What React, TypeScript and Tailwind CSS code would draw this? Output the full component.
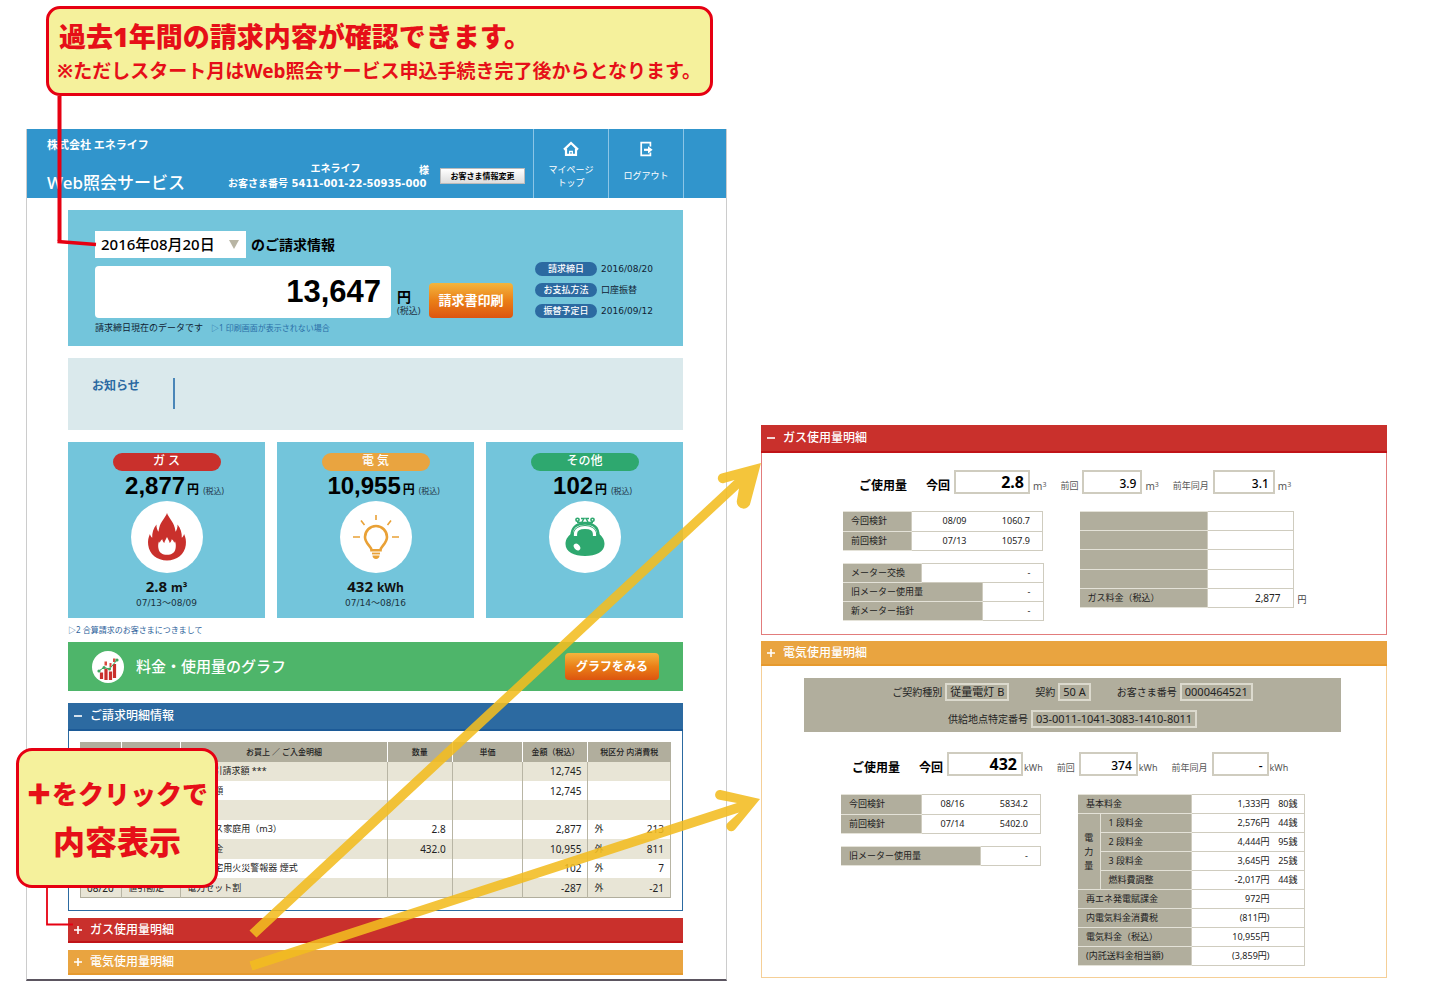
import React from "react";

type Tone = "red" | "orange" | "blue";

const barTone: Record<Tone, string> = {
  red: "bg-[#c9302c] border-[#c01418]",
  orange: "bg-[#e9a440] border-[#e69a2e]",
  blue: "bg-[#2c6aa1] border-[#1c5a97]",
};

function Bar({ tone, open, title, tall }: { tone: Tone; open: boolean; title: string; tall?: boolean }) {
  return (
    <button
      type="button"
      aria-expanded={open}
      className={`flex w-full items-center gap-2 border-b-2 pl-1.5 text-left text-[12px] font-medium text-white ${
        tall ? "h-[28px]" : "h-[25px]"
      } ${barTone[tone]}`}
    >
      <svg viewBox="0 0 8 8" className="size-2" stroke="currentColor" strokeWidth="1.6" aria-hidden="true">
        <path d={open ? "M0 4H8" : "M0 4H8M4 0V8"} />
      </svg>
      <span className="leading-4">{title}</span>
    </button>
  );
}

function House() {
  return (
    <svg viewBox="0 0 16 16" className="h-4 w-4" fill="none" stroke="#fff" strokeWidth="2.2" aria-hidden="true">
      <path d="M1 8.6 8 2l7 6.6" />
      <path d="M3 7.5v6.4h10V7.5" />
      <path d="M6.7 14v-3.6h2.6V14" strokeWidth="1.3" />
    </svg>
  );
}

function Exit() {
  return (
    <svg viewBox="0 0 16 16" className="h-4 w-4" fill="none" stroke="#fff" strokeWidth="1.7" aria-hidden="true">
      <path d="M12.4 5.6V1.600H3.200v12.800h9.200v-3" />
      <path d="M6 8.800h5" strokeWidth="2.200" />
      <path d="M10 5.200 14.600 8.800 10 12.400z" fill="#fff" stroke="none" />
    </svg>
  );
}

function Flame() {
  return (
    <svg viewBox="0 0 40 48" className="h-12 w-10" aria-hidden="true">
      <path
        fill="#c9302c"
        d="M20 0c1.500 4.500 6.200 8.500 7.700 14.500.4 1.500.7 3 .8 4.200 1.500-1.800 2.200-4.700 2-7.200 3.200 3.800 4.500 8.500 4.300 13.300 1.200-1 2-2.300 2.300-3.800C38.700 24.500 39.300 28 38.800 32 37.800 41.200 29.800 47.500 20 47.500S2.200 41.200 1.200 32c-.5-4 .1-7.500 1.700-11 .3 1.500 1.100 2.800 2.300 3.800C5 20 6.300 15.300 9.500 11.500c-.2 2.500.5 5.400 2 7.200.1-1.200.4-2.700.8-4.200C13.800 8.500 18.500 4.500 20 0z"
      />
      <path
        fill="#fff"
        d="M20 24c1 2 2.200 3.700 2.700 6 1.200-1 1.800-2.300 2-3.800 1.500 1 2 2 2.500 3.600 0.500-.4.700-.8.800-1.500 1 2.500 1 5 .5 7.500-.8 4-4 6-8.500 6s-7.700-2-8.500-6c-.5-2.500-.5-5 .5-7.500.1.700.3 1.100.8 1.500.5-1.600 1-2.600 2.500-3.600.2 1.500.8 2.800 2 3.800.5-2.300 1.700-4 2.700-6z"
      />
    </svg>
  );
}

function Bulb() {
  return (
    <svg viewBox="0 0 46 46" className="h-[46px] w-[46px]" fill="none" stroke="#e9a136" strokeWidth="1.6" aria-hidden="true">
      <path d="M23 1v5M8 6.500l3.500 4.500M38 6.500 34.500 11M0 23h7M39 23h7" />
      <path
        d="M18.500 36.200c0-4-6.500-6.500-6.500-13.200a11 11 0 0 1 22 0c0 6.700-6.500 9.200-6.500 13.200z"
        strokeWidth="2.600"
      />
      <path d="M19 39.500h8" strokeWidth="1.800" />
      <path d="M19.500 41.500h7c0 2-1.500 3.500-3.500 3.500s-3.500-1.500-3.500-3.500z" fill="#e9a136" stroke="none" />
    </svg>
  );
}

function Purse() {
  return (
    <svg viewBox="0 0 40 40" className="size-10" aria-hidden="true">
      <path
        fill="#2ea86f"
        d="M8 16C3.500 18 .5 22 .5 27 .5 35 9 39 20 39s19.500-4 19.500-12c0-5-3-9-7.500-11-1-5-6-8-12-8S9 11 8 16z"
      />
      <path d="M10.500 19v-2c0-4 4-6.500 9.500-6.500s9.500 2.500 9.500 6.500v2" fill="none" stroke="#fff" strokeWidth="3.200" />
      <path d="M6.500 19c0-8 4-12.500 13.500-12.500S33.500 11 33.500 19" fill="none" stroke="#2ea86f" strokeWidth="2.400" />
      <circle cx="12.500" cy="2.800" r="1.600" fill="none" stroke="#2ea86f" strokeWidth="1.600" />
      <circle cx="27.500" cy="2.800" r="1.600" fill="none" stroke="#2ea86f" strokeWidth="1.600" />
      <path d="M12 5.500h16M16 1.500h3l-2 3.500M24 1.500h-3l2 3.500" fill="none" stroke="#2ea86f" strokeWidth="1.500" />
      <ellipse cx="12" cy="30" rx="2.800" ry="3.800" fill="#fff" transform="rotate(-40 12 30)" />
    </svg>
  );
}

function GraphBadge() {
  return (
    <svg viewBox="0 0 32 32" className="size-8" aria-hidden="true">
      <circle cx="16" cy="16" r="16" fill="#fff" />
      <path
        d="M9.500 28v-6.500M14 29v-11.500M18.500 29v-8.500M22.500 27V13"
        stroke="#c9302c"
        strokeWidth="3.200"
        fill="none"
      />
      <path d="M12.500 10.500h2.500v4h-2.500zM17.500 12h2v4h-2zM21 7.500h2.500v3.500h-2.500z" fill="#d84a40" />
      <path d="M6 20.500 12 16.500 17.500 18 25 9" stroke="#3aa55c" strokeWidth="1" fill="none" />
      <g fill="#3aa55c">
        <circle cx="7" cy="20" r="1.600" />
        <circle cx="12" cy="16.500" r="1.500" />
        <circle cx="17.500" cy="18" r="1.500" />
        <circle cx="25" cy="9" r="1.600" />
      </g>
    </svg>
  );
}

function UsageCard({
  name,
  pill,
  amount,
  icon,
  usage,
  unit,
  period,
}: {
  name: string;
  pill: string;
  amount: string;
  icon: React.ReactNode;
  usage?: string;
  unit?: React.ReactNode;
  period?: string;
}) {
  return (
    <section className="flex h-[176px] flex-col items-center bg-[#73c5db] pt-[11px]">
      <h2 className={`h-[18px] w-[108px] rounded-full text-center text-[12px] font-medium leading-4 text-white ${pill}`}>
        {name}
      </h2>
      <p className="flex h-[30px] items-baseline gap-0.5 pl-4 leading-[30px] text-black">
        <span className="font-['Liberation_Sans',sans-serif] text-[24px] font-bold">{amount}</span>
        <span className="text-[12px] font-bold">円</span>
        <span className="pl-0.5 text-[8px] text-[#234]">(税込)</span>
      </p>
      <div className="flex size-[72px] items-center justify-center rounded-full bg-white">{icon}</div>
      {usage && (
        <>
          <p className="pt-[5px] text-[15px] font-bold leading-4 text-[#111]">
            {usage} <span className="text-[12px]">{unit}</span>
          </p>
          <p className="pt-px font-['DejaVu_Sans','Noto_Sans_CJK_JP',sans-serif] text-[9px] leading-3 text-[#1b3340]">
            {period}
          </p>
        </>
      )}
    </section>
  );
}

const details = [
  ["", "", "*** 割引請求額 ***", "", "", "12,745", "", ""],
  ["", "", "入金総額", "", "", "12,745", "", ""],
  ["", "", "", "", "", "", "", ""],
  ["", "", "都市ガス家庭用（m3）", "2.8", "", "2,877", "外", "213"],
  ["", "", "電気料金", "432.0", "", "10,955", "外", "811"],
  ["", "", "　　住宅用火災警報器 煙式", "", "", "102", "外", "7"],
  ["08/20", "値引勘定", "電力セット割", "", "", "-287", "外", "-21"],
];

function DetailTable() {
  const cell = "border-r border-[#b8b5a4] py-0";
  return (
    <table className="h-[156px] w-full table-fixed border-collapse border border-[#b1ae9d] text-[10px] leading-3 text-[#222]">
      <colgroup>
        <col className="w-[7%]" />
        <col className="w-[10%]" />
        <col className="w-[35%]" />
        <col className="w-[11%]" />
        <col className="w-[12%]" />
        <col className="w-[11%]" />
        <col className="w-[14%]" />
      </colgroup>
      <thead>
        <tr className="h-[19px] bg-[#b1ae9d] text-[8px]">
          {["", "", "お買上 ／ ご入金明細", "数量", "単価", "金額（税込）", "税区分 内消費税"].map((h, i) => (
            <th key={i} scope="col" className="border-r border-white p-0 text-center font-medium last:border-[#b1ae9d]">
              {h}
            </th>
          ))}
        </tr>
      </thead>
      <tbody>
        {details.map((r, i) => (
          <tr key={i} className="h-[19px] odd:bg-[#e8e5d6] even:bg-white">
            <td className={`${cell} pl-1.5`}>{r[0]}</td>
            <td className={`${cell} pl-1.5 text-[9px]`}>{r[1]}</td>
            <td className={`${cell} whitespace-pre pl-1.5 text-[9px]`}>{r[2]}</td>
            <td className={`${cell} pr-1.5 text-right`}>{r[3]}</td>
            <td className={`${cell} pr-1.5 text-right`}>{r[4]}</td>
            <td className={`${cell} pr-1.5 text-right`}>{r[5]}</td>
            <td className={`${cell} px-1.5`}>
              <span className="flex justify-between">
                <span className="text-[9px]">{r[6]}</span>
                <span>{r[7]}</span>
              </span>
            </td>
          </tr>
        ))}
      </tbody>
    </table>
  );
}

function Reading({
  label,
  value,
  unit,
  box,
  main,
}: {
  label: string;
  value: string;
  unit: React.ReactNode;
  box: string;
  main?: boolean;
}) {
  return (
    <div className="flex items-end">
      <span className={main ? "pr-1 text-[12px] font-bold leading-4 text-black" : "pr-1 text-[9px] leading-4 text-[#555]"}>
        {label}
      </span>
      <output
        className={`flex h-6 items-center justify-end border-2 border-[#cfccbf] pr-1 text-black ${box} ${
          main ? "text-[16px] font-bold" : "pt-1 text-[12px] font-medium"
        }`}
      >
        {value}
      </output>
      {unit}
    </div>
  );
}

const cubic = (
  <span className="pl-[3px] text-[10px] leading-4 text-[#555]">
    m<sup className="text-[7px]">3</sup>
  </span>
);

const kwh = <span className="pl-px text-[9px] leading-4 text-[#555]">kWh</span>;

const thBase = "border-y border-[#e4e2d8] bg-[#b1ae9d] py-0 pl-2 text-left font-normal";
const tdBase = "border border-[#cfccbf] bg-white py-0 text-right";
const miniTable = "table-fixed border-collapse text-[9px] leading-3 text-[#222]";

function MeterDates({ rows, wide }: { rows: string[][]; wide?: boolean }) {
  return (
    <table className={`${miniTable} h-10 w-[200px]`}>
      <tbody>
        {rows.map((r) => (
          <tr key={r[0]}>
            <th scope="row" className={`${thBase} ${wide ? "w-20" : "w-[68px]"}`}>
              {r[0]}
            </th>
            <td className={`${tdBase} border-r-0 pr-2`}>{r[1]}</td>
            <td className={`${tdBase} w-[68px] border-l-0 pr-3`}>{r[2]}</td>
          </tr>
        ))}
      </tbody>
    </table>
  );
}

function Tag({ label, value }: { label: string; value: string }) {
  return (
    <div className="flex items-center gap-[3px]">
      <dt>{label}</dt>
      <dd className="h-[18px] border-2 border-[#dcdace] px-[3px] text-[11px] leading-[14px]">{value}</dd>
    </div>
  );
}

function GasPanel() {
  return (
    <section>
      <Bar tone="red" open tall title="ガス使用量明細" />
      <div className="h-[182px] border border-t-0 border-[#e27c7c] pt-[17px]">
        <div className="flex items-end pl-[97px]">
          <span className="w-[67px] text-[12px] font-bold leading-4 text-black">ご使用量</span>
          <div className="flex gap-[14px]">
            <Reading main label="今回" value="2.8" unit={cubic} box="w-[76px]" />
            <Reading label="前回" value="3.9" unit={cubic} box="w-[60px]" />
            <Reading label="前年同月" value="3.1" unit={cubic} box="w-[62px]" />
          </div>
        </div>
        <div className="flex gap-9 pl-[81px] pt-[17px]">
          <div className="flex flex-col gap-3">
            <MeterDates
              rows={[
                ["今回検針", "08/09", "1060.7"],
                ["前回検針", "07/13", "1057.9"],
              ]}
            />
            <table className={`${miniTable} h-[58px] w-[200px]`}>
              <colgroup>
                <col className="w-[78px]" />
                <col className="w-[61px]" />
                <col className="w-[61px]" />
              </colgroup>
              <tbody>
                <tr>
                  <th scope="row" className={thBase}>メーター交換</th>
                  <td colSpan={2} className={`${tdBase} pr-3`}>-</td>
                </tr>
                <tr>
                  <th scope="row" colSpan={2} className={thBase}>旧メーター使用量</th>
                  <td className={`${tdBase} pr-3`}>-</td>
                </tr>
                <tr>
                  <th scope="row" colSpan={2} className={thBase}>新メーター指針</th>
                  <td className={`${tdBase} pr-3`}>-</td>
                </tr>
              </tbody>
            </table>
          </div>
          <div className="flex items-end gap-1">
            <table className={`${miniTable} h-[97px] w-[214px] self-start`}>
              <tbody>
                {["", "", "", "", "ガス料金（税込）"].map((l, i) => (
                  <tr key={i} className="h-[19px]">
                    <th scope="row" className={`${thBase} w-[128px]`}>{l}</th>
                    <td className={`${tdBase} pr-3 text-[10px]`}>{l && "2,877"}</td>
                  </tr>
                ))}
              </tbody>
            </table>
            <span className="pb-[13px] text-[9px] leading-4 text-[#444]">円</span>
          </div>
        </div>
      </div>
    </section>
  );
}

function PowerPanel() {
  const yen = (v: string, sen?: string) => (
    <span className="flex justify-end">
      <span>{v}</span>
      <span className="w-7 text-right">{sen}</span>
    </span>
  );
  const steps = [
    ["1 段料金", "2,576円", "44銭"],
    ["2 段料金", "4,444円", "95銭"],
    ["3 段料金", "3,645円", "25銭"],
    ["燃料費調整", "-2,017円", "44銭"],
  ];
  const totals = [
    ["再エネ発電賦課金", "972円"],
    ["内電気料金消費税", "(811円)"],
    ["電気料金（税込）", "10,955円"],
    ["(内託送料金相当額)", "(3,859円)"],
  ];
  return (
    <section>
      <Bar tone="orange" open={false} title="電気使用量明細" />
      <div className="h-[312px] border border-t-0 border-[#f5cf97] pt-3">
        <dl className="ml-[42px] mr-[45px] flex h-[54px] flex-col items-center gap-[9px] bg-[#b1ae9d] pt-[5px] text-[10px] leading-4 text-[#222]">
          <div className="flex gap-[26px]">
            <Tag label="ご契約種別" value="従量電灯 B" />
            <Tag label="契約" value="50 A" />
            <Tag label="お客さま番号" value="0000464521" />
          </div>
          <Tag label="供給地点特定番号" value="03-0011-1041-3083-1410-8011" />
        </dl>
        <div className="flex items-end pl-[90px] pt-5">
          <span className="w-[67px] text-[12px] font-bold leading-4 text-black">ご使用量</span>
          <div className="flex gap-[14px]">
            <Reading main label="今回" value="432" unit={kwh} box="w-[76px]" />
            <Reading label="前回" value="374" unit={kwh} box="w-[59px]" />
            <Reading label="前年同月" value="-" unit={kwh} box="w-[57px]" />
          </div>
        </div>
        <div className="flex gap-[37px] pl-[79px] pt-[18px]">
          <div className="flex flex-col gap-3">
            <MeterDates
              wide
              rows={[
                ["今回検針", "08/16", "5834.2"],
                ["前回検針", "07/14", "5402.0"],
              ]}
            />
            <table className={`${miniTable} h-5 w-[200px]`}>
              <tbody>
                <tr>
                  <th scope="row" className={`${thBase} w-[139px]`}>旧メーター使用量</th>
                  <td className={`${tdBase} pr-3`}>-</td>
                </tr>
              </tbody>
            </table>
          </div>
          <table className={`${miniTable} h-[172px] w-[226px]`}>
            <colgroup>
              <col className="w-[22px]" />
              <col className="w-[91px]" />
              <col className="w-[113px]" />
            </colgroup>
            <tbody>
              <tr>
                <th scope="row" colSpan={2} className={thBase}>基本料金</th>
                <td className={`${tdBase} pr-1.5`}>{yen("1,333円", "80銭")}</td>
              </tr>
              {steps.map((s, i) => (
                <tr key={s[0]}>
                  {i === 0 && (
                    <th scope="rowgroup" rowSpan={4} className="border border-l-0 border-[#e4e2d8] bg-[#b1ae9d] p-0 text-center font-normal leading-[14px]">
                      電
                      <br />
                      力
                      <br />
                      量
                    </th>
                  )}
                  <th scope="row" className={`${thBase} border-l`}>{s[0]}</th>
                  <td className={`${tdBase} pr-1.5`}>{yen(s[1], s[2])}</td>
                </tr>
              ))}
              {totals.map((t) => (
                <tr key={t[0]}>
                  <th scope="row" colSpan={2} className={thBase}>{t[0]}</th>
                  <td className={`${tdBase} pr-1.5`}>{yen(t[1])}</td>
                </tr>
              ))}
            </tbody>
          </table>
        </div>
      </div>
    </section>
  );
}

const orangeButton =
  "rounded-sm bg-linear-to-b from-[#f3b53c] via-[#ea7f17] to-[#dc5410] font-bold text-white";

export default function App() {
  return (
    <div className="relative bg-white pb-[3px] pt-1.5 font-['Noto_Sans','Noto_Sans_CJK_JP',sans-serif]">
      <aside className="ml-[46px] flex h-[90px] w-[667px] flex-col justify-center whitespace-nowrap rounded-[14px] border-[3px] border-[#e60012] bg-[#f5f19c] pl-2 pt-1 text-[#e60f18]">
        <p className="pl-0.5 text-[27px] font-black leading-9">過去1年間の請求内容が確認できます。</p>
        <p className="text-[19px] font-bold leading-8">※ただしスタート月はWeb照会サービス申込手続き完了後からとなります。</p>
      </aside>

      <main className="grid grid-cols-[701fr_626fr] items-start gap-[34px] pl-[26px] pr-[53px] pt-[33px]">
        <div className="border-x border-b-2 border-x-[#ccc] border-b-[#5b5560] pb-1">
          <header className="flex h-[69px] bg-[#3195cc] pr-[42px] text-white">
            <div className="flex w-[201px] flex-col gap-4 pl-5 pt-2">
              <p className="text-[11px] font-bold leading-4">株式会社 エネライフ</p>
              <h1 className="text-[17px] font-medium leading-7">Web照会サービス</h1>
            </div>
            <div className="w-[201px] pt-[33px] font-['DejaVu_Sans','Noto_Sans_CJK_JP',sans-serif] text-[10px] font-bold">
              <p className="flex leading-[14px]">
                <span className="flex-1 pl-6 text-center">エネライフ</span>
                <span className="self-end pt-1 leading-[10px]">様</span>
              </p>
              <p className="whitespace-nowrap leading-4">お客さま番号 5411-001-22-50935-000</p>
            </div>
            <button
              type="button"
              className="ml-auto mr-2 mt-[39px] h-4 w-[85px] border border-[#bbb] bg-linear-to-b from-white to-[#ddd] text-[8px] font-bold leading-3 text-black"
            >
              お客さま情報変更
            </button>
            <nav className="flex border-r border-[#8cc5e6] text-center text-[9px] leading-[13px]">
              <a href="#mypage" className="flex w-[75px] flex-col items-center gap-1.5 border-l border-[#8cc5e6] pt-3">
                <House />
                <span>
                  マイページ
                  <br />
                  トップ
                </span>
              </a>
              <a href="#logout" className="flex w-[75px] flex-col items-center gap-3 border-l border-[#8cc5e6] pt-3">
                <Exit />
                <span>ログアウト</span>
              </a>
            </nav>
          </header>

          <div className="pl-[41px] pr-[43px] pt-3">
            <section className="flex h-[136px] bg-[#73c5db] pl-[27px] pt-[21px]">
              <div>
                <div className="flex items-center gap-[5px]">
                  <div className="relative w-[151px]">
                    <select
                      aria-label="請求日"
                      className="block h-[27px] w-full appearance-none bg-white pl-1.5 text-[15px] font-medium text-black"
                    >
                      <option>2016年08月20日</option>
                    </select>
                    <svg viewBox="0 0 10 9" className="pointer-events-none absolute right-[7px] top-[9px] h-[9px] w-[10px]" aria-hidden="true">
                      <path d="M0 0h10L5 9z" fill="#b8b5a4" />
                    </svg>
                  </div>
                  <span className="text-[14px] font-bold text-black">のご請求情報</span>
                </div>
                <div className="flex items-end pt-2">
                  <output className="flex h-[52px] w-[296px] items-center justify-end rounded-sm bg-white pr-2.5 font-['Liberation_Sans',sans-serif] text-[31px] font-bold text-black">
                    13,647
                  </output>
                  <p className="w-[38px] pl-1.5 text-[14px] font-bold leading-[14px] text-black">
                    円
                    <span className="block text-[9px] font-normal text-[#234]">(税込)</span>
                  </p>
                  <button type="button" className={`h-[35px] w-[84px] text-[13px] ${orangeButton}`}>
                    請求書印刷
                  </button>
                </div>
                <p className="flex gap-2 pt-0.5 text-[9px] leading-4 text-[#123]">
                  請求締日現在のデータです
                  <a href="#print-help" className="text-[8px] text-[#2a6ea8]">
                    ▷1 印刷画面が表示されない場合
                  </a>
                </p>
              </div>
              <dl className="flex flex-col gap-[7px] pl-[22px] pt-[31px] text-[9px] leading-[14px]">
                {[
                  ["請求締日", "2016/08/20"],
                  ["お支払方法", "口座振替"],
                  ["振替予定日", "2016/09/12"],
                ].map(([k, v]) => (
                  <div key={k} className="flex gap-1">
                    <dt className="w-[62px] rounded-full bg-[#2c6aa1] text-center font-medium text-white">{k}</dt>
                    <dd className="font-['DejaVu_Sans','Noto_Sans_CJK_JP',sans-serif] text-[#123]">{v}</dd>
                  </div>
                ))}
              </dl>
            </section>

            <section className="mt-3 flex h-[72px] bg-[#dae9ec] pl-6 pt-5">
              <h2 className="w-[81px] text-[12px] font-bold leading-4 text-[#2a69a2]">お知らせ</h2>
              <div className="h-[31px] border-l-2 border-[#4a86b8]" />
            </section>

            <div className="mt-3 grid grid-cols-3 gap-3">
              <UsageCard
                name="ガ ス"
                pill="bg-[#c9302c]"
                amount="2,877"
                icon={<Flame />}
                usage="2.8"
                unit="m³"
                period="07/13～08/09"
              />
              <UsageCard
                name="電 気"
                pill="bg-[#e9a440]"
                amount="10,955"
                icon={<Bulb />}
                usage="432"
                unit="kWh"
                period="07/14～08/16"
              />
              <UsageCard name="その他" pill="bg-[#2ea86f]" amount="102" icon={<Purse />} />
            </div>
            <a href="#combined" className="block h-6 text-[8px] leading-6 text-[#2c5f9a]">
              ▷2 合算請求のお客さまにつきまして
            </a>

            <section className="flex h-[49px] items-center bg-[#4eb56a] pl-6 pr-6">
              <GraphBadge />
              <h2 className="flex-1 pl-3 text-[15px] font-medium text-white">料金・使用量のグラフ</h2>
              <button type="button" className={`h-[27px] w-[94px] text-[12px] ${orangeButton}`}>
                グラフをみる
              </button>
            </section>

            <section className="mt-3">
              <Bar tone="blue" open tall title="ご請求明細情報" />
              <div className="h-[180px] border border-t-0 border-[#2c6aa1] px-[11px] pt-[11px]">
                <DetailTable />
              </div>
            </section>
            <div className="flex flex-col gap-[7px] pt-[7px]">
              <Bar tone="red" open={false} title="ガス使用量明細" />
              <Bar tone="orange" open={false} title="電気使用量明細" />
            </div>
          </div>
        </div>

        <div className="flex flex-col gap-1.5 pt-[296px]">
          <GasPanel />
          <PowerPanel />
        </div>
      </main>

      <svg viewBox="0 0 1440 984" className="pointer-events-none absolute left-0 top-0 w-full" fill="none" aria-hidden="true">
        <path d="M59.500 96V241" stroke="#e60012" strokeWidth="4" />
        <path d="M57.500 241.500 96 244.500" stroke="#e60012" strokeWidth="3.500" />
        <path d="M47 886V924.500H73" stroke="#e60012" strokeWidth="1.800" />
        <g fill="#f3bd20" opacity="0.88">
          <path d="M256.500 937.500 739 488.500 736.800 501 A4.800 4.800 0 0 0 750.500 502.500 L761 463 721.500 473.500 A4.800 4.800 0 0 0 724 483 L734.500 480 249.500 930.500z" />
          <path d="M252.500 970.500 739 812.500 727.500 823 A4.800 4.800 0 0 0 735 829.500 L760 799 720.500 790 A4.800 4.800 0 0 0 719.500 799.800 L737 803 249.500 961.500z" />
        </g>
      </svg>

      <aside className="absolute left-4 top-[748px] flex h-[140px] w-[202px] flex-col items-center justify-center whitespace-nowrap rounded-2xl border-[3px] border-[#e60012] bg-[#f5f19c] font-black text-[#e60f18]">
        <p className="text-[26px] leading-[48px]">
          <span className="[-webkit-text-stroke:2px_#e60f18]">＋</span>をクリックで
        </p>
        <p className="text-[32px] leading-[48px]">内容表示</p>
      </aside>
    </div>
  );
}
